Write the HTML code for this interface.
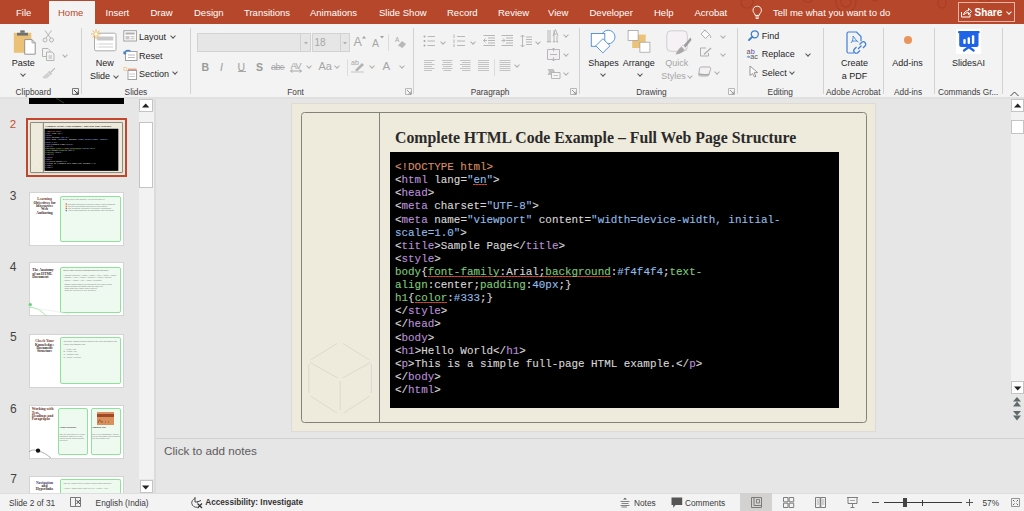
<!DOCTYPE html>
<html><head><meta charset="utf-8">
<style>
*{margin:0;padding:0;box-sizing:border-box}
html,body{width:1024px;height:511px;overflow:hidden;background:#e6e6e6;font-family:"Liberation Sans",sans-serif;position:relative}
.a{position:absolute}
svg{position:absolute;overflow:visible}
.tab{position:absolute;top:7.3px;color:#fff;font-size:9.5px;line-height:normal;white-space:nowrap}
.sep{position:absolute;top:28px;width:1px;height:66px;background:#d2d2d2}
.gl{position:absolute;top:86.5px;font-size:8.3px;line-height:normal;color:#404040;white-space:nowrap}
.rt{position:absolute;font-size:9px;margin-top:0.3px;line-height:normal;color:#262626;white-space:nowrap}
.dis{color:#a6a6a6}
.st{position:absolute;top:498.2px;font-size:8.3px;line-height:normal;color:#3a3a3a;white-space:nowrap}
.cl{position:absolute;left:395px;-webkit-text-stroke:0.12px currentColor;font-family:"Liberation Mono",monospace;font-size:10.9px;line-height:13.11px;color:#d6d6d6;white-space:pre}
.o{color:#d88c66}.p{color:#bb8fda}.b{color:#8ebde9}.g{color:#7ccb7c}
.sq{background:repeating-linear-gradient(90deg,#d8452c 0 2px,#a83420 2px 3px) no-repeat;background-size:100% 1.3px;background-position:0 10px}
.num{position:absolute;left:9.5px;font-size:12px;line-height:normal;color:#444;white-space:nowrap}
.thumb{position:absolute;left:28.5px;width:95.5px;height:54px;background:#fff;border:1px solid #d4d4d4}
.tt{position:absolute;font-family:"Liberation Serif",serif;font-weight:bold;font-size:3.7px;line-height:3.4px;color:#3a2a2a;white-space:nowrap}
.tb{position:absolute;font-size:2.1px;line-height:2.4px;color:#777;white-space:nowrap}
.gb{position:absolute;border:1.3px solid #8ee39a;background:#eefaef;border-radius:2px}
.chev{position:absolute;width:4px;height:4px;border-right:1px solid #555;border-bottom:1px solid #555;transform:rotate(45deg)}
.chev.d{border-color:#b0b0b0}
</style></head>
<body>
<!-- ============ TAB BAR ============ -->
<div class="a" style="left:0;top:0;width:1024px;height:24px;background:#b7472a"></div>
<svg width="1024" height="24" style="left:0;top:0">
  <g fill="none" stroke="#9a3a22" stroke-width="1.2" opacity="0.55">
    <circle cx="747" cy="2" r="6"/>
    <circle cx="846" cy="2" r="10"/>
    <circle cx="846" cy="2" r="5"/>
    <circle cx="808" cy="-4" r="6"/>
    <ellipse cx="942" cy="3" rx="4" ry="5"/>
    <circle cx="985" cy="-6" r="8"/>
    <circle cx="875" cy="-2" r="3"/>
  </g>
</svg>
<div class="a" style="left:48.6px;top:1px;width:46.2px;height:23px;background:#f3f3f3"></div>
<div class="tab" style="left:16px">File</div>
<div class="tab" style="left:58px;color:#b7472a">Home</div>
<div class="tab" style="left:105.5px">Insert</div>
<div class="tab" style="left:150.5px">Draw</div>
<div class="tab" style="left:194px">Design</div>
<div class="tab" style="left:244px">Transitions</div>
<div class="tab" style="left:310px">Animations</div>
<div class="tab" style="left:379px">Slide Show</div>
<div class="tab" style="left:447px">Record</div>
<div class="tab" style="left:498px">Review</div>
<div class="tab" style="left:548px">View</div>
<div class="tab" style="left:589.5px">Developer</div>
<div class="tab" style="left:654px">Help</div>
<div class="tab" style="left:694.5px">Acrobat</div>
<svg width="12" height="14" style="left:752px;top:5px">
  <path d="M5.2 1.2 C2.6 1.2 1 3.1 1 5.3 C1 7 2 8 2.8 9 L3.2 10.4 L7.2 10.4 L7.6 9 C8.4 8 9.4 7 9.4 5.3 C9.4 3.1 7.8 1.2 5.2 1.2 Z M3.4 12 L7 12 M3.8 13.4 L6.6 13.4" fill="none" stroke="#fff" stroke-width="1"/>
</svg>
<div class="tab" style="left:773px">Tell me what you want to do</div>
<div class="a" style="left:958px;top:2px;width:57px;height:20px;border:1px solid #e7b3a4"></div>
<svg width="12" height="11" style="left:961px;top:7px">
  <path d="M0.5 5 L0.5 10 L9 10 L9 7 M2.5 8 C3 5 5 3.6 7.5 3.6 L7.5 1.2 L10.5 4.5 L7.5 7.6 L7.5 5.6 C5.5 5.6 3.8 6.4 2.5 8 Z" fill="none" stroke="#fff" stroke-width="1"/>
</svg>
<div class="tab" style="left:974.5px;font-weight:bold;font-size:10px;top:7px">Share</div>
<div class="chev" style="left:1007px;top:9.5px;border-color:#fff"></div>

<!-- ============ RIBBON ============ -->
<div class="a" style="left:0;top:24px;width:1024px;height:73px;background:#f3f3f3"></div>
<div class="a" style="left:0;top:97px;width:1024px;height:2px;background:#e0e0e0"></div>
<div class="sep" style="left:81px"></div>
<div class="sep" style="left:190px"></div>
<div class="sep" style="left:413px"></div>
<div class="sep" style="left:579px"></div>
<div class="sep" style="left:737px"></div>
<div class="sep" style="left:823px"></div>
<div class="sep" style="left:883px"></div>
<div class="sep" style="left:934px"></div>
<div class="sep" style="left:1002px"></div>
<div class="gl" style="left:15.6px">Clipboard</div>
<div class="gl" style="left:124.6px">Slides</div>
<div class="gl" style="left:287.3px">Font</div>
<div class="gl" style="left:470.7px">Paragraph</div>
<div class="gl" style="left:636.3px">Drawing</div>
<div class="gl" style="left:767.6px">Editing</div>
<div class="gl" style="left:826px">Adobe Acrobat</div>
<div class="gl" style="left:894px">Add-ins</div>
<div class="gl" style="left:938px">Commands Gr...</div>
<!-- dialog launchers -->
<svg width="8" height="7" style="left:72px;top:88px"><path d="M0.5 0.5 H6.5 V6.5 H0.5 Z" fill="none" stroke="#777" stroke-width="1"/><path d="M2 2 L6 6 M3.5 6 H6 V3.5" fill="none" stroke="#444" stroke-width="1"/></svg>
<svg width="8" height="7" style="left:404.5px;top:88px"><path d="M0.5 0.5 H6.5 V6.5 H0.5 Z" fill="none" stroke="#b8b8b8" stroke-width="1"/><path d="M2 2 L6 6 M3.5 6 H6 V3.5" fill="none" stroke="#999" stroke-width="1"/></svg>
<svg width="8" height="7" style="left:570px;top:88px"><path d="M0.5 0.5 H6.5 V6.5 H0.5 Z" fill="none" stroke="#b8b8b8" stroke-width="1"/><path d="M2 2 L6 6 M3.5 6 H6 V3.5" fill="none" stroke="#999" stroke-width="1"/></svg>
<svg width="8" height="7" style="left:728px;top:88px"><path d="M0.5 0.5 H6.5 V6.5 H0.5 Z" fill="none" stroke="#b8b8b8" stroke-width="1"/><path d="M2 2 L6 6 M3.5 6 H6 V3.5" fill="none" stroke="#999" stroke-width="1"/></svg>

<!-- Clipboard group -->
<svg width="26" height="27" style="left:12px;top:29px">
  <path d="M1.8 3.8 H19.3 V23.8 H1.8 Z" fill="#eac176"/>
  <path d="M5 3.8 H16 V6.6 H5 Z" fill="#707070"/>
  <path d="M8.3 1.4 H12.7 V3.8 H8.3 Z" fill="#707070"/>
  <path d="M12.7 10.6 H20 L23.2 13.8 V25.2 H12.7 Z" fill="#fff" stroke="#8a8a8a" stroke-width="0.9"/>
  <path d="M20 10.6 V13.8 H23.2" fill="none" stroke="#8a8a8a" stroke-width="0.8"/>
</svg>
<div class="rt" style="left:11.7px;top:57.4px">Paste</div>
<div class="chev" style="left:20.5px;top:72px"></div>
<svg width="13" height="13" style="left:41.5px;top:29.5px">
  <g fill="none" stroke="#b4b4b4" stroke-width="1">
    <path d="M3 0.5 L8.5 8 M9.5 0.5 L4 8"/>
    <circle cx="3" cy="10" r="2"/><circle cx="9.5" cy="10" r="2"/>
  </g>
</svg>
<svg width="13" height="13" style="left:41.5px;top:47.5px">
  <g fill="#f3f3f3" stroke="#b4b4b4" stroke-width="1">
    <path d="M0.5 0.5 H6 L8 2.5 V8.5 H0.5 Z"/>
    <path d="M4.5 4 H10 L12 6 V12.5 H4.5 Z"/>
    <path d="M6.5 8 H10 M6.5 10 H10"/>
  </g>
</svg>
<div class="chev d" style="left:62.5px;top:52.5px"></div>
<svg width="14" height="12" style="left:41.5px;top:66.5px">
  <path d="M12.5 0.8 L13.3 1.6 L9.5 5.4 L8.7 4.6 Z" fill="#b8b8b8"/>
  <path d="M7.3 3.8 L10.2 6.7 L8.8 8.1 L5.9 5.2 Z" fill="#c4c4c4"/>
  <path d="M5.6 5.5 L8.5 8.4 L4.5 11.5 L0.8 11.2 L0.6 10 Z" fill="#d0d0d0"/>
</svg>

<!-- Slides group -->
<svg width="28" height="24" style="left:91px;top:28.5px">
  <rect x="3.5" y="4.2" width="21.5" height="17.6" rx="1.5" fill="#fff" stroke="#acacac" stroke-width="1"/>
  <rect x="5.8" y="7.5" width="16.5" height="4" fill="#cacaca"/>
  <path d="M7.5 15 H22 M7.5 18 H22" stroke="#cfcfcf" stroke-width="1"/>
  <path d="M5.6 15 H6.4 M5.6 18 H6.4" stroke="#cfcfcf" stroke-width="1"/>
  <g stroke="#efb550" stroke-width="0.9">
    <path d="M5 0 V2.2 M5 7.8 V10 M0 5 H2.2 M7.8 5 H10 M1.5 1.5 L3 3 M7 7 L8.5 8.5 M8.5 1.5 L7 3 M3 7 L1.5 8.5"/>
  </g>
  <circle cx="5" cy="5" r="2.2" fill="#fff" stroke="#efb550" stroke-width="0.9"/>
</svg>
<div class="rt" style="left:95.7px;top:57.4px">New</div>
<div class="rt" style="left:90px;top:70.3px">Slide</div>
<div class="chev" style="left:114px;top:73.5px"></div>
<svg width="15" height="12" style="left:123px;top:29.5px">
  <rect x="0.8" y="0.7" width="12.6" height="10.3" fill="#fff" stroke="#a0a0a0" stroke-width="1"/>
  <rect x="2.5" y="2.5" width="9.2" height="2" fill="#b0b0b0"/>
  <rect x="2.5" y="6" width="4" height="3.5" fill="#c8c8c8"/>
  <path d="M7.5 6.8 H11.5 M7.5 8.8 H11.5" stroke="#aaa" stroke-width="0.8"/>
</svg>
<div class="rt" style="left:139px;top:31.4px">Layout</div>
<div class="chev" style="left:170.5px;top:34px"></div>
<svg width="15" height="12" style="left:123px;top:48.5px">
  <rect x="2.5" y="2.5" width="11.5" height="9" fill="#fff" stroke="#a0a0a0" stroke-width="1"/>
  <path d="M5 6 H12 M5 8.5 H12" stroke="#aaa" stroke-width="0.8"/>
  <path d="M1 5 C1.5 1.5 5 0.5 7.5 2" fill="none" stroke="#3c7fd0" stroke-width="1.3"/>
  <path d="M0 2.5 L1.2 5.8 L4 4" fill="#3c7fd0"/>
</svg>
<div class="rt" style="left:139px;top:50.4px">Reset</div>
<svg width="15" height="13" style="left:123px;top:66.5px">
  <rect x="0.8" y="0.5" width="3" height="3" fill="none" stroke="#f0b050" stroke-width="0.8" stroke-dasharray="1 0.6"/>
  <path d="M5 2.2 H13.5" stroke="#e07a5a" stroke-width="1"/>
  <rect x="5" y="3.5" width="8.5" height="9" fill="#fff" stroke="#a0a0a0" stroke-width="1"/>
  <path d="M6.5 7 H12 M6.5 9.5 H12" stroke="#bbb" stroke-width="0.8"/>
</svg>
<div class="rt" style="left:139px;top:68.8px">Section</div>
<div class="chev" style="left:173px;top:70px"></div>

<!-- Font group -->
<div class="a" style="left:197px;top:33px;width:114px;height:19px;background:#e6e6e6;border:1px solid #d2d2d2"></div>
<div class="a" style="left:300px;top:34px;width:1px;height:17px;background:#d2d2d2"></div>
<svg width="5" height="3" style="left:303.5px;top:42px"><path d="M0 0 H4 L2 2.5 Z" fill="#b0b0b0"/></svg>
<div class="a" style="left:312px;top:33px;width:38px;height:19px;background:#e6e6e6;border:1px solid #d2d2d2"></div>
<div class="a" style="left:339.5px;top:34px;width:1px;height:17px;background:#d2d2d2"></div>
<svg width="5" height="3" style="left:342.5px;top:42px"><path d="M0 0 H4 L2 2.5 Z" fill="#b0b0b0"/></svg>
<div class="rt dis" style="left:314.5px;top:36.5px;font-size:10px">18</div>
<div class="rt dis" style="left:353.5px;top:35px;font-size:12.5px">A</div>
<svg width="5" height="3" style="left:362px;top:36px"><path d="M0 2.5 L2 0 L4 2.5 Z" fill="#a0a0a0"/></svg>
<div class="rt dis" style="left:372px;top:37px;font-size:10.5px">A</div>
<svg width="5" height="3" style="left:379.5px;top:36px"><path d="M0 0 H4 L2 2.5 Z" fill="#a0a0a0"/></svg>
<div class="a" style="left:388px;top:34px;width:1px;height:17px;background:#dcdcdc"></div>
<div class="rt dis" style="left:395px;top:36px;font-size:6.5px">A</div>
<svg width="10" height="8" style="left:396.5px;top:40px"><path d="M1 5.5 L5 1 L9 4 L5.5 8 Z" fill="#b8b8b8"/></svg>

<div class="rt" style="left:201.5px;top:60.5px;font-size:10.5px;font-weight:bold;color:#9a9a9a">B</div>
<div class="rt" style="left:220px;top:60.5px;font-size:10.5px;font-style:italic;color:#9a9a9a">I</div>
<div class="rt" style="left:237.5px;top:60.5px;font-size:10.5px;color:#9a9a9a">U</div>
<div class="a" style="left:237.5px;top:71px;width:8px;height:1px;background:#a8a8a8"></div>
<div class="rt" style="left:256px;top:60.5px;font-size:10.5px;font-weight:bold;color:#9a9a9a">S</div>
<div class="rt dis" style="left:271px;top:62px;font-size:9px;letter-spacing:-0.6px">abc</div>
<div class="a" style="left:271px;top:67px;width:14px;height:1px;background:#a8a8a8"></div>
<div class="rt dis" style="left:290.5px;top:59.5px;font-size:9.5px;letter-spacing:-0.8px">AV</div>
<svg width="13" height="4" style="left:290px;top:68.5px"><path d="M0.5 2 H11.5 M0.5 2 L2.5 0.5 M0.5 2 L2.5 3.5 M11.5 2 L9.5 0.5 M11.5 2 L9.5 3.5" fill="none" stroke="#a8a8a8" stroke-width="1"/></svg>
<div class="chev d" style="left:306.5px;top:63.5px"></div>
<div class="rt dis" style="left:318.5px;top:60px;font-size:11px">Aa</div>
<div class="chev d" style="left:335px;top:63.5px"></div>
<div class="a" style="left:346.5px;top:58.5px;width:1px;height:17px;background:#dcdcdc"></div>
<div class="rt dis" style="left:351px;top:58.5px;font-size:7px">ab</div>
<svg width="14" height="12" style="left:351px;top:60.5px"><path d="M4 9 L11 2 L13 4 L6 10.5 Z" fill="#b4b4b4"/><path d="M0 11 H13" stroke="#d0d0d0" stroke-width="1.3"/></svg>
<div class="chev d" style="left:369.5px;top:63.5px"></div>
<div class="rt dis" style="left:382.5px;top:59.5px;font-size:11.5px">A</div>
<div class="chev d" style="left:399.5px;top:63.5px"></div>

<!-- Paragraph group -->
<svg width="160" height="60" style="left:420px;top:26px">
  <g fill="none" stroke="#b0b0b0" stroke-width="0.9">
    <!-- bullets -->
    <circle cx="4.5" cy="10.5" r="1" fill="#a8a8a8" stroke="none"/><circle cx="4.5" cy="15" r="1" fill="#a8a8a8" stroke="none"/><circle cx="4.5" cy="19.5" r="1" fill="#a8a8a8" stroke="none"/>
    <path d="M7.5 10.5 H15 M7.5 15 H15 M7.5 19.5 H15"/>
    <!-- numbering -->
    <path d="M34 8.5 V12 M34 13.5 V17 M34 18 V21"/>
    <path d="M37 10.5 H45 M37 15 H45 M37 19.5 H45"/>
    <!-- dec indent -->
    <path d="M63.5 9.5 H75 M68 12 H75 M68 14.5 H75 M68 17 H75 M63.5 19.5 H75"/>
    <path d="M67 14.5 H63.5 M65.5 12.5 L63.5 14.5 L65.5 16.5"/>
    <!-- inc indent -->
    <path d="M81.5 9.5 H93 M86 12 H93 M86 14.5 H93 M86 17 H93 M81.5 19.5 H93"/>
    <path d="M81.5 14.5 H85 M83 12.5 L85 14.5 L83 16.5"/>
    <!-- line spacing -->
    <path d="M102.5 9 V21 M100.5 11 L102.5 9 L104.5 11 M100.5 19 L102.5 21 L104.5 19"/>
    <path d="M106 11 H112 M106 13.5 H112 M106 16 H112 M106 18.5 H112"/>
    <!-- text direction -->
    <path d="M128 4 V16 M130 4 V16 M134 4 V16 M137 16 V10 M133 10 L135.5 3.5 L138 10 M134 8 H137"/>
    <path d="M127 15 L128 16.5 L129 15 M129 15 L130 16.5 L131 15 M133 15 L134 16.5 L135 15 M136 15 L137 16.5 L138 15" stroke-width="0.8"/>
    <!-- align text -->
    <path d="M127.5 23.5 H139.5 V33.5 H127.5 Z" fill="#f3eff3"/>
    <path d="M130 28.5 H137"/>
    <path d="M133.5 22 V25.5 M132 23.5 L133.5 22 L135 23.5 M133.5 31 V35 M132 33.5 L133.5 35 L135 33.5" stroke-width="0.8"/>
    <!-- smart art -->
    <path d="M127.5 43 H133.5 L135 46 L133.5 49 H127.5 L129 46 Z" fill="#c0c0c0" stroke="none"/>
    <path d="M131.5 46.5 H140 V52.5 H131.5 Z" fill="#f6f6f6"/>
    <path d="M133.5 49.5 H138" stroke-width="0.7"/>
  </g>
  <g fill="none" stroke="#bdbdbd" stroke-width="0.9">
    <path d="M4 34.5 H14.5 M4 36.5 H12 M4 38.5 H14.5 M4 40.5 H12 M4 42.5 H14.5 M4 44.5 H12"/>
    <path d="M22 34.5 H32.5 M23 36.5 H31.5 M22 38.5 H32.5 M23 40.5 H31.5 M22 42.5 H32.5 M23.5 44.5 H31"/>
    <path d="M40 34.5 H50.5 M42 36.5 H50.5 M40 38.5 H50.5 M42 40.5 H50.5 M40 42.5 H50.5 M42 44.5 H50.5"/>
    <path d="M58 34.5 H69 M58 36.5 H69 M58 38.5 H69 M58 40.5 H69 M58 42.5 H69 M58 44.5 H69"/>
    <path d="M79.5 34.5 H90.5 M79.5 36.5 H90.5 M79.5 38.5 H90.5 M79.5 40.5 H90.5 M79.5 42.5 H90.5 M79.5 44.5 H90.5"/>
  </g>
</svg>
<div class="chev d" style="left:441px;top:39.5px"></div>
<div class="chev d" style="left:470.5px;top:39.5px"></div>
<div class="chev d" style="left:536px;top:39.5px"></div>
<div class="chev d" style="left:564px;top:33px"></div>
<div class="chev d" style="left:564px;top:52px"></div>
<div class="chev d" style="left:564px;top:71px"></div>
<div class="chev d" style="left:515px;top:63px"></div>
<div class="a" style="left:494px;top:58.5px;width:1px;height:17px;background:#dcdcdc"></div>

<!-- Drawing group -->
<svg width="26" height="26" style="left:589px;top:28px">
  <g fill="#fff" stroke="#4a8ad4" stroke-width="0.9">
    <circle cx="19.2" cy="9" r="6.8"/>
    <rect x="2.3" y="5.5" width="13.5" height="12.8"/>
    <path d="M13.9 10.7 L21 17.8 L13.9 24.9 L6.8 17.8 Z"/>
  </g>
</svg>
<div class="rt" style="left:588.2px;top:57.4px">Shapes</div>
<div class="chev" style="left:600.5px;top:72px"></div>
<svg width="24" height="25" style="left:627px;top:29px">
  <rect x="5.2" y="5.6" width="13.5" height="13.4" fill="#ebc277"/>
  <rect x="1.1" y="1.5" width="10" height="10" fill="#fff" stroke="#999" stroke-width="0.7"/>
  <rect x="12.9" y="13.2" width="10" height="10" fill="#fff" stroke="#999" stroke-width="0.7"/>
</svg>
<div class="rt" style="left:622.8px;top:57.4px">Arrange</div>
<div class="chev" style="left:637.5px;top:72px"></div>
<svg width="26" height="25" style="left:666px;top:30px">
  <rect x="0.8" y="0.8" width="20.5" height="20.5" rx="4" fill="#f5f1f5" stroke="#cfcfcf" stroke-width="1"/>
  <path d="M24.5 7.5 L17.5 15.5 L19.5 17.5 L25.5 10 Z" fill="#9e9e9e"/><path d="M16.8 15.2 L20 18.4 L18.8 19.6 L15.6 16.4 Z" fill="#fff" stroke="#b0b0b0" stroke-width="0.6"/><path d="M15.2 16.8 L18.4 20 C17 22.5 14 24.2 9.5 24.5 C11 21.5 13 18.5 15.2 16.8 Z" fill="#a8a8a8"/>
</svg>
<div class="rt dis" style="left:665.3px;top:57.4px">Quick</div>
<div class="rt dis" style="left:661.2px;top:70.3px">Styles</div>
<div class="chev d" style="left:688px;top:73.5px"></div>
<svg width="12" height="11" style="left:699.5px;top:28.5px">
  <path d="M5 1 L9.5 5.5 L5.5 9.5 L1 5 Z" fill="#fafafa" stroke="#a8a8a8" stroke-width="0.9"/>
  <path d="M4 0.5 L6 2.5 M9.5 5.5 C10.5 6.5 11 8 10.5 9" fill="none" stroke="#a8a8a8" stroke-width="0.9"/>
</svg>
<div class="chev d" style="left:721px;top:34px"></div>
<svg width="12" height="10" style="left:699.5px;top:46.5px">
  <path d="M0.5 1 H6 M0.5 1 V9 H8.5 V6" fill="none" stroke="#a8a8a8" stroke-width="0.9"/>
  <path d="M3.5 7 L10.5 0.5 L11.5 1.5 L4.5 8 Z" fill="#b0b0b0"/>
</svg>
<div class="chev d" style="left:721px;top:52px"></div>
<svg width="14" height="11" style="left:697.5px;top:66px">
  <path d="M3 1 H11 C12.5 1 13 2 12.5 3.5 L11 8.5 C10.5 9.5 10 10 9 10 H2 C1 10 0.5 9 0.8 8 L1.5 3 C1.8 1.8 2.2 1 3 1 Z" fill="#f4f0f4" stroke="#a8a8a8" stroke-width="0.9"/>
  <path d="M0.8 8 C2 8.5 8 8.7 11 8.5" fill="none" stroke="#a8a8a8" stroke-width="1.5"/>
</svg>
<div class="chev d" style="left:714.5px;top:69.5px"></div>

<!-- Editing group -->
<svg width="12" height="11" style="left:747.5px;top:30px">
  <circle cx="6.8" cy="4.3" r="3.5" fill="none" stroke="#3d7dd0" stroke-width="1.3"/>
  <path d="M4.3 6.8 L1 10" stroke="#3d7dd0" stroke-width="1.8" stroke-linecap="round"/>
</svg>
<div class="rt" style="left:761.8px;top:31.2px">Find</div>
<svg width="14" height="12" style="left:746px;top:48px">
  <text x="0.6" y="6" font-family="Liberation Sans" font-size="7.2" fill="#555">a</text>
  <text x="4.8" y="6" font-family="Liberation Sans" font-size="7.2" fill="#6a4aa8">b</text>
  <text x="4.2" y="11" font-family="Liberation Sans" font-size="7.2" fill="#555">ac</text>
  <path d="M0.8 8.8 H3.6 M2.4 7.6 L3.6 8.8 L2.4 10" fill="none" stroke="#3d7dd0" stroke-width="0.8"/>
</svg>
<div class="rt" style="left:761.8px;top:49.2px">Replace</div>
<div class="chev" style="left:806px;top:52px"></div>
<svg width="10" height="13" style="left:748.5px;top:65px">
  <path d="M1 1 L1 10.5 L3.5 8.5 L5.5 12 L7 11.3 L5 7.8 L8.5 7.5 Z" fill="#fff" stroke="#8a8a8a" stroke-width="0.9"/>
</svg>
<div class="rt" style="left:761.8px;top:67.4px">Select</div>
<div class="chev" style="left:789.5px;top:70px"></div>

<!-- Adobe Acrobat -->
<svg width="22" height="24" style="left:845.5px;top:31px">
  <path d="M8 22 H2.5 C1.5 22 1 21.5 1 20.5 V2.5 C1 1.5 1.5 1 2.5 1 H10.5 L15 5.5 V10" fill="none" stroke="#3f7fdc" stroke-width="1.2"/>
  <path d="M5 12 C6.5 10 7.5 7 7 5 C9 7 10 10 12.5 11 M6 10 H11" fill="none" stroke="#3f7fdc" stroke-width="0.9"/>
  <path d="M13.5 13.5 L15.5 11.5 C16.5 10.5 18 10.5 19 11.5 C20 12.5 20 14 19 15 L17 17 M14 19.5 L12 21.5 C11 22.5 9.5 22.5 8.5 21.5 C7.5 20.5 7.5 19 8.5 18 L10.5 16 M12 18 L15.5 14.5" fill="none" stroke="#3f7fdc" stroke-width="1.2"/>
</svg>
<div class="rt" style="left:840.9px;top:57.4px">Create</div>
<div class="rt" style="left:841.7px;top:70.3px">a PDF</div>

<!-- Add-ins -->
<div class="a" style="left:903.5px;top:36.3px;width:8px;height:8px;border-radius:50%;background:#e8945a"></div>
<div class="rt" style="left:892.2px;top:57.4px">Add-ins</div>

<!-- SlidesAI -->
<div class="a" style="left:955.8px;top:29.3px;width:25.2px;height:24.7px;background:#fff"></div>
<svg width="22" height="21" style="left:957.6px;top:31.3px">
  <rect x="0" y="0" width="21.7" height="2.2" rx="1" fill="#1f63e6"/>
  <path d="M1.2 1.5 H20.5 V14 C20.5 15.2 19.7 16 18.5 16 H3.2 C2 16 1.2 15.2 1.2 14 Z" fill="#1f63e6"/>
  <rect x="5.3" y="8" width="2.4" height="5" rx="1" fill="#fff"/>
  <rect x="9.6" y="6.2" width="2.4" height="6.8" rx="1" fill="#fff"/>
  <rect x="13.9" y="4.3" width="2.4" height="8.7" rx="1" fill="#fff"/>
  <path d="M10.8 16 L6 19.5 M10.8 16 L15.6 19.5" stroke="#1f63e6" stroke-width="2.2" stroke-linecap="round"/>
</svg>
<div class="rt" style="left:951.9px;top:57.4px">SlidesAI</div>
<svg width="10" height="6" style="left:1009.5px;top:90.5px"><path d="M0.5 5 L4.5 1 L8.5 5" fill="none" stroke="#444" stroke-width="1"/></svg>

<!-- RIBBON_GROUPS -->

<!-- ============ LEFT PANEL ============ -->
<!-- left panel border -->
<div class="a" style="left:154px;top:99px;width:2px;height:394px;background:#dcdcdc"></div>
<!-- partial top thumbnail (slide 1) -->
<div class="a" style="left:29px;top:98px;width:95px;height:5.5px;background:#000"></div>
<svg width="20" height="7" style="left:56px;top:98px"><path d="M0 0 L8 5" stroke="#3a7a3a" stroke-width="0.6"/></svg>
<!-- slide 2 selected -->
<div class="num" style="left:9.7px;top:117.5px;color:#c4512f;font-size:11.5px">2</div>
<div class="a" style="left:26px;top:118px;width:100.5px;height:59px;border:2px solid #c4462a"></div>
<div class="a" style="left:0;top:0;width:0;height:0;transform-origin:0 0;transform:translate(28.2px,120.7px) scale(0.16444) translate(-291px,-103px)">
<div class="a" style="left:291px;top:103px;width:585px;height:329px;background:#eeeadc"></div>
<div class="a" style="left:301px;top:112px;width:566px;height:311px;border:1.2px solid #85827a;border-radius:3.5px"></div>
<div class="a" style="left:379px;top:113px;width:1.2px;height:309px;background:#85827a"></div>
<svg width="80" height="80" style="left:300px;top:335px">
  <g fill="none" stroke="#d9d5c6" stroke-width="0.8">
    <path d="M37 8.5 L10.5 25 M43 8.5 L69.5 25 M10 27.5 L38 43 M70.5 27.5 L42.5 43 M8.8 29 V58 M71.4 29 V58 M40.2 46 V75 M10.5 61 L37 78 M70 61 L43.5 78"/>
  </g>
</svg>
<div class="a" style="left:395px;top:128.7px;font-family:'Liberation Serif',serif;font-weight:bold;font-size:15.8px;line-height:normal;color:#2a2a2a;white-space:nowrap">Complete HTML Code Example – Full Web Page Structure</div>
<div class="a" style="left:390px;top:152px;width:449px;height:256px;background:#000"></div>
<!-- CODE -->
<div class="cl" style="top:161.07px"><span class="o">&lt;!DOCTYPE html&gt;</span></div>
<div class="cl" style="top:174.18px">&lt;<span class="p">html</span> lang=<span class="b">"<span class="sq">en</span>"</span>&gt;</div>
<div class="cl" style="top:187.29px">&lt;<span class="p">head</span>&gt;</div>
<div class="cl" style="top:200.40px">&lt;<span class="p">meta</span> charset=<span class="b">"UTF-8"</span>&gt;</div>
<div class="cl" style="top:213.51px">&lt;<span class="p">meta</span> name=<span class="b">"viewport"</span> content=<span class="b">"width=device-width, initial-</span></div>
<div class="cl" style="top:226.62px"><span class="b">scale=1.0"</span>&gt;</div>
<div class="cl" style="top:239.73px">&lt;<span class="p">title</span>&gt;Sample Page&lt;/<span class="p">title</span>&gt;</div>
<div class="cl" style="top:252.84px">&lt;<span class="p">style</span>&gt;</div>
<div class="cl" style="top:265.95px"><span class="g">body</span>{<span class="sq"><span class="g">font-family</span>:Arial;<span class="g">background</span></span>:<span class="b">#f4f4f4</span>;<span class="g">text-</span></div>
<div class="cl" style="top:279.06px"><span class="g">align</span>:center;<span class="g">padding</span>:<span class="b">40px</span>;}</div>
<div class="cl" style="top:292.17px"><span class="g">h1</span>{<span class="g sq">color</span>:<span class="b">#333</span>;}</div>
<div class="cl" style="top:305.28px">&lt;/<span class="p">style</span>&gt;</div>
<div class="cl" style="top:318.39px">&lt;/<span class="p">head</span>&gt;</div>
<div class="cl" style="top:331.50px">&lt;<span class="p">body</span>&gt;</div>
<div class="cl" style="top:344.61px">&lt;<span class="p">h1</span>&gt;Hello World&lt;/<span class="p">h1</span>&gt;</div>
<div class="cl" style="top:357.72px">&lt;<span class="p">p</span>&gt;This is a simple full-page HTML example.&lt;/<span class="p">p</span>&gt;</div>
<div class="cl" style="top:370.83px">&lt;/<span class="p">body</span>&gt;</div>
<div class="cl" style="top:383.94px">&lt;/<span class="p">html</span>&gt;</div>
</div>

<div class="a" style="left:29.85px;top:122.2px;width:93px;height:51.1px;border:0.8px solid #8f8c82;border-radius:1px"></div>
<div class="a" style="left:42.5px;top:122.5px;width:0.8px;height:50.5px;background:#8f8c82"></div>
<!-- slide 3 -->
<div class="num" style="left:9.7px;top:189px">3</div>
<div class="thumb" style="top:191.6px"></div>
<div class="gb" style="left:60.1px;top:195.8px;width:60.8px;height:46px;border-style:solid"></div>
<div class="tt" style="left:29.5px;top:198.1px;width:30px;text-align:center"><span style="color:#7a3a2a">Learning</span><br>Objectives for<br>Interactive<br>Web<br>Authoring</div>
<div class="tb" style="left:63px;top:198.2px">By the end of this session, you will be able to:</div>
<div class="tb" style="left:67.8px;top:202.6px;line-height:2.2px">Navigate document structure using HTML headings<br>Create links images and lists in web pages<br>Use semantic elements to structure information<br>Apply good practices for accessible web authoring</div>
<svg width="4" height="10" style="left:65px;top:202.8px"><circle cx="1.3" cy="1" r="0.8" fill="#d2603a"/><circle cx="1.3" cy="3.2" r="0.8" fill="#d88040"/><circle cx="1.3" cy="5.4" r="0.8" fill="#d07040"/><circle cx="1.3" cy="7.6" r="0.8" fill="#4a7ad0"/></svg>

<!-- slide 4 -->
<div class="num" style="left:9.7px;top:259.7px">4</div>
<div class="thumb" style="top:262.3px"></div>
<div class="gb" style="left:60.1px;top:267px;width:60.8px;height:45.6px"></div>
<div class="tt" style="left:32.3px;top:269.1px">The Anatomy<br>of an HTML<br>Document</div>
<div class="tb" style="left:63.5px;top:269.4px;color:#555">Every page follows a standard skeleton structure</div>
<div class="tb" style="left:63.5px;top:273.5px;line-height:2.6px">&lt;!DOCTYPE html&gt; &lt;html&gt; &lt;head&gt; &lt;title&gt; &lt;meta&gt; &lt;body&gt;<br>&lt;header&gt; &lt;nav&gt; &lt;main&gt; &lt;section&gt; &lt;footer&gt; content<br>&lt;article&gt; &lt;aside&gt; &lt;div&gt; &lt;span&gt; elements</div>
<div class="tb" style="left:64.5px;top:282.5px;line-height:2.1px">DOCTYPE declares the document type and version<br>head contains metadata and the page title<br>body holds the visible page content<br>Tags are nested in a tree structure</div>
<svg width="50" height="14" style="left:28.6px;top:302.5px">
  <circle cx="1.3" cy="1.6" r="1.7" fill="#6ad37a"/>
  <path d="M0.5 4 C6 5 10 6 13 9 C15 11 16 12 18 13" fill="none" stroke="#8ee39a" stroke-width="0.8"/>
  <path d="M8 6 C20 7 32 9 42 12" fill="none" stroke="#e6e6e6" stroke-width="0.6"/>
</svg>

<!-- slide 5 -->
<div class="num" style="left:9.9px;top:330.4px">5</div>
<div class="thumb" style="top:333.6px"></div>
<div class="gb" style="left:60.3px;top:337.4px;width:60.3px;height:46.3px"></div>
<div class="tt" style="left:29.5px;top:340.1px;width:30px;text-align:center"><span style="color:#7a3a2a">Check Your</span><br>Knowledge:<br>Document<br>Structure</div>
<div class="tb" style="left:63.5px;top:340.3px;line-height:2.5px;color:#667">Question: Which element must be the very first thing in an<br>HTML file? Choose one:</div>
<div class="tb" style="left:63.5px;top:347.5px;line-height:2.7px">A. &lt;html&gt; tag<br>B. &lt;head&gt; tag<br>C. &lt;!DOCTYPE&gt;<br>D. &lt;body&gt; element</div>

<!-- slide 6 -->
<div class="num" style="left:9.9px;top:401.5px">6</div>
<div class="thumb" style="top:404.6px"></div>
<div class="gb" style="left:58.4px;top:408.4px;width:29.4px;height:46.2px"></div>
<div class="gb" style="left:90.7px;top:408.4px;width:29.9px;height:46.2px"></div>
<div class="tt" style="left:31.7px;top:408.2px;color:#6a3022">Working with<br>Text,<br>Headings and<br>Paragraphs</div>
<div class="a" style="left:96.7px;top:411.9px;width:17.3px;height:12.7px;background:#d9905c"></div>
<div class="a" style="left:96.7px;top:413.5px;width:17.3px;height:3.8px;background:#9e4a28"></div>
<svg width="17" height="6" style="left:97px;top:418px"><path d="M1 5 C2 1 3 1 4 4 L6 4 M8 4 H9 M11 4 H12" fill="none" stroke="#6a3020" stroke-width="0.6"/></svg>
<div class="tt" style="left:59.5px;top:426.1px;font-size:2.3px">Visual Hierarchy</div>
<div class="tb" style="left:59.5px;top:432.6px;line-height:2.1px">Use h1 through h6 to create<br>hierarchy. Each level has<br>visual weight and meaning<br>structure.</div>
<div class="tt" style="left:92px;top:426.1px;font-size:2.3px">Semantic Text</div>
<div class="tb" style="left:92px;top:432.6px;line-height:2.1px">Use p for paragraphs, strong<br>em for emphasis and meaning<br>not just styling only.</div>
<svg width="30" height="12" style="left:29px;top:447px">
  <path d="M0 5 C3 2 6 3 9 4 C14 5 17 7 22 11" fill="none" stroke="#777" stroke-width="0.6"/>
  <circle cx="9" cy="3.6" r="2.2" fill="#111"/>
</svg>

<!-- slide 7 -->
<div class="num" style="left:10.2px;top:471.5px">7</div>
<div class="a" style="left:28.6px;top:475.6px;width:95.6px;height:18px;background:#fff;border:1px solid #d4d4d4;border-bottom:none;overflow:hidden"></div>
<div class="a" style="left:60.2px;top:479.2px;width:60.6px;height:14px;border:1.3px solid #8ee39a;border-bottom:none;background:#eefaef;border-radius:2px 2px 0 0"></div>
<div class="tt" style="left:29.5px;top:481.9px;width:30px;text-align:center;line-height:3.3px"><span style="color:#3a3a6a">Navigation</span><br>and<br>Hyperlinks</div>
<div class="tb" style="left:63.5px;top:481.3px;line-height:4.8px">Use the anchor tag to connect pages and resources<br>&lt;a href="page.html"&gt;Link text&lt;/a&gt; &lt;a href="#id"&gt;<br>Relative paths link to other files</div>
<div class="a" style="left:0;top:493px;width:156px;height:3px;background:#e6e6e6"></div>

<!-- left scrollbar -->
<div class="a" style="left:138.5px;top:111px;width:15px;height:368px;background:#f2f2f2"></div>
<div class="a" style="left:139px;top:98.6px;width:13.5px;height:13.3px;background:#fff;border:1px solid #c4c4c4"></div>
<svg width="8" height="5" style="left:141.8px;top:103px"><path d="M0 4.5 L3.7 0.5 L7.4 4.5 Z" fill="#222"/></svg>
<div class="a" style="left:139px;top:122.4px;width:13.5px;height:65.6px;background:#fff;border:1px solid #c4c4c4"></div>
<div class="a" style="left:139.5px;top:479.5px;width:13px;height:13px;background:#fff;border:1px solid #c4c4c4"></div>
<svg width="8" height="5" style="left:142px;top:484.5px"><path d="M0 0.5 L3.7 4.5 L7.4 0.5 Z" fill="#222"/></svg>


<!-- ============ SLIDE ============ -->
<div class="a" style="left:0;top:0;width:0;height:0">
<div class="a" style="left:291px;top:103px;width:585px;height:329px;background:#eeeadc;box-shadow:inset 0 0 0 1px #dddbd3"></div>
<div class="a" style="left:301px;top:112px;width:566px;height:311px;border:1.2px solid #85827a;border-radius:3.5px"></div>
<div class="a" style="left:379px;top:113px;width:1.2px;height:309px;background:#85827a"></div>
<svg width="80" height="80" style="left:300px;top:335px">
  <g fill="none" stroke="#d9d5c6" stroke-width="0.8">
    <path d="M37 8.5 L10.5 25 M43 8.5 L69.5 25 M10 27.5 L38 43 M70.5 27.5 L42.5 43 M8.8 29 V58 M71.4 29 V58 M40.2 46 V75 M10.5 61 L37 78 M70 61 L43.5 78"/>
  </g>
</svg>
<div class="a" style="left:395px;top:128.7px;font-family:'Liberation Serif',serif;font-weight:bold;font-size:15.8px;line-height:normal;color:#2a2a2a;white-space:nowrap">Complete HTML Code Example – Full Web Page Structure</div>
<div class="a" style="left:390px;top:152px;width:449px;height:256px;background:#000"></div>
<!-- CODE -->
<div class="cl" style="top:161.07px"><span class="o">&lt;!DOCTYPE html&gt;</span></div>
<div class="cl" style="top:174.18px">&lt;<span class="p">html</span> lang=<span class="b">"<span class="sq">en</span>"</span>&gt;</div>
<div class="cl" style="top:187.29px">&lt;<span class="p">head</span>&gt;</div>
<div class="cl" style="top:200.40px">&lt;<span class="p">meta</span> charset=<span class="b">"UTF-8"</span>&gt;</div>
<div class="cl" style="top:213.51px">&lt;<span class="p">meta</span> name=<span class="b">"viewport"</span> content=<span class="b">"width=device-width, initial-</span></div>
<div class="cl" style="top:226.62px"><span class="b">scale=1.0"</span>&gt;</div>
<div class="cl" style="top:239.73px">&lt;<span class="p">title</span>&gt;Sample Page&lt;/<span class="p">title</span>&gt;</div>
<div class="cl" style="top:252.84px">&lt;<span class="p">style</span>&gt;</div>
<div class="cl" style="top:265.95px"><span class="g">body</span>{<span class="sq"><span class="g">font-family</span>:Arial;<span class="g">background</span></span>:<span class="b">#f4f4f4</span>;<span class="g">text-</span></div>
<div class="cl" style="top:279.06px"><span class="g">align</span>:center;<span class="g">padding</span>:<span class="b">40px</span>;}</div>
<div class="cl" style="top:292.17px"><span class="g">h1</span>{<span class="g sq">color</span>:<span class="b">#333</span>;}</div>
<div class="cl" style="top:305.28px">&lt;/<span class="p">style</span>&gt;</div>
<div class="cl" style="top:318.39px">&lt;/<span class="p">head</span>&gt;</div>
<div class="cl" style="top:331.50px">&lt;<span class="p">body</span>&gt;</div>
<div class="cl" style="top:344.61px">&lt;<span class="p">h1</span>&gt;Hello World&lt;/<span class="p">h1</span>&gt;</div>
<div class="cl" style="top:357.72px">&lt;<span class="p">p</span>&gt;This is a simple full-page HTML example.&lt;/<span class="p">p</span>&gt;</div>
<div class="cl" style="top:370.83px">&lt;/<span class="p">body</span>&gt;</div>
<div class="cl" style="top:383.94px">&lt;/<span class="p">html</span>&gt;</div>
</div>

<!-- ============ RIGHT SCROLLBAR ============ -->
<div class="a" style="left:1010.5px;top:98.5px;width:13.5px;height:283px;background:#f2f2f2"></div>
<div class="a" style="left:1010.5px;top:98.5px;width:13px;height:13px;background:#fff;border:1px solid #c4c4c4"></div>
<svg width="8" height="5" style="left:1013.5px;top:102.5px"><path d="M0 4.5 L3.7 0.5 L7.4 4.5 Z" fill="#222"/></svg>
<div class="a" style="left:1010.5px;top:120.4px;width:13px;height:14.1px;background:#fff;border:1px solid #c4c4c4"></div>
<div class="a" style="left:1010.5px;top:381.3px;width:13px;height:13px;background:#fff;border:1px solid #c4c4c4"></div>
<svg width="8" height="5" style="left:1013.5px;top:386px"><path d="M0 0.5 L3.7 4.5 L7.4 0.5 Z" fill="#222"/></svg>
<svg width="10" height="25" style="left:1013px;top:397px">
  <path d="M4 0 L8 4.5 H0 Z M4 4.5 L8 9.5 H0 Z" fill="#5e6a6a"/>
  <path d="M0 14 H8 L4 18.5 Z M0 18.5 H8 L4 23.5 Z" fill="#5e6a6a"/>
</svg>


<!-- ============ NOTES ============ -->
<div class="a" style="left:156px;top:438px;width:868px;height:1px;background:#d0d0d0"></div>
<div class="a" style="left:164px;top:444.1px;font-size:11.7px;line-height:normal;color:#5c5c5c;white-space:nowrap">Click to add notes</div>

<!-- ============ STATUS BAR ============ -->
<div class="a" style="left:0;top:493px;width:1024px;height:18px;background:#f3f3f3;border-top:1px solid #dedede"></div>
<div class="st" style="left:9px">Slide 2 of 31</div>
<svg width="13" height="11" style="left:70px;top:497px">
  <path d="M0.5 0.5 H5.5 V9.5 H0.5 Z M5.5 0.5 H10.5 V9.5 H5.5" fill="none" stroke="#6a6a6a" stroke-width="0.9"/>
  <path d="M6.5 3 L10 7 M10 3 L6.5 7" stroke="#444" stroke-width="1"/>
</svg>
<div class="st" style="left:95.6px">English (India)</div>
<svg width="13" height="12" style="left:191px;top:497px">
  <path d="M4 1.5 C1.5 2.5 0.5 4.5 0.8 6.5 C1.2 9 3.5 10.5 6 10.2" fill="none" stroke="#555" stroke-width="1"/>
  <path d="M4 0 V5 H7 M6 5 L10 3.5" fill="none" stroke="#444" stroke-width="1"/>
  <path d="M6.5 6.5 L11 11 M11 6.5 L6.5 11" stroke="#333" stroke-width="1.2"/>
</svg>
<div class="st" style="left:205.3px;font-weight:bold;color:#333;font-size:8.2px">Accessibility: Investigate</div>
<svg width="11" height="10" style="left:620px;top:497px">
  <path d="M3 2.5 L5 0.8 L7 2.5 Z" fill="#555"/>
  <path d="M0.5 4.5 H9.5 M1.5 6.5 H8.5 M0.5 8.5 H9.5 M1.5 10 H7" stroke="#666" stroke-width="0.8"/>
</svg>
<div class="st" style="left:634px">Notes</div>
<svg width="12" height="12" style="left:670.8px;top:496.8px">
  <path d="M0.5 0.5 H11.2 V8 H4.5 L2.2 10.8 V8 H0.5 Z" fill="#555"/>
</svg>
<div class="st" style="left:685px">Comments</div>
<div class="a" style="left:740px;top:493.4px;width:32px;height:17.6px;background:#d4d2d0"></div>
<svg width="12" height="12" style="left:750.5px;top:496.5px">
  <path d="M0.5 0.5 H10.5 V10.5 H0.5 Z M3 0.5 V8.5 H10.5" fill="none" stroke="#707070" stroke-width="0.9"/>
  <path d="M5.5 2.5 H8.5 V6 H5.5 Z" fill="none" stroke="#707070" stroke-width="0.8"/>
</svg>
<svg width="12" height="12" style="left:783px;top:496.5px">
  <path d="M0.5 0.5 H5 V4.8 H0.5 Z M6.2 0.5 H10.7 V4.8 H6.2 Z M0.5 6.2 H5 V10.5 H0.5 Z M6.2 6.2 H10.7 V10.5 H6.2 Z" fill="none" stroke="#707070" stroke-width="0.9"/>
</svg>
<svg width="12" height="12" style="left:815px;top:496.5px">
  <path d="M0.5 0.5 H5.2 V10.5 H0.5 Z M5.8 0.5 H10.5 V10.5 H5.8 Z" fill="none" stroke="#707070" stroke-width="0.9"/>
  <path d="M1.8 3 H4 M1.8 5 H4 M1.8 7 H4 M7 3 H9.3 M7 5 H9.3 M7 7 H9.3" stroke="#909090" stroke-width="0.7"/>
</svg>
<svg width="12" height="12" style="left:847px;top:496.5px">
  <path d="M0 0.5 H11 M1 1 V6.5 H10 V1 M5.5 6.5 V10.5 M3.5 10.5 H7.5" fill="none" stroke="#707070" stroke-width="0.9"/>
  <path d="M3 3.5 H8" stroke="#909090" stroke-width="0.8"/>
</svg>
<div class="a" style="left:872px;top:502px;width:6.5px;height:1px;background:#555"></div>
<div class="a" style="left:884px;top:502px;width:78px;height:1.3px;background:#3a3a3a"></div>
<div class="a" style="left:922px;top:499.5px;width:1px;height:6px;background:#3a3a3a"></div>
<div class="a" style="left:903px;top:498.2px;width:4px;height:8.5px;background:#444"></div>
<div class="a" style="left:966px;top:502px;width:6.6px;height:1px;background:#555"></div>
<div class="a" style="left:969px;top:499px;width:1px;height:6.8px;background:#555"></div>
<div class="st" style="left:982.5px">57%</div>
<svg width="10" height="10" style="left:1011px;top:497.5px">
  <path d="M0.5 0.5 H8.5 V8.5 H0.5 Z" fill="none" stroke="#8a8a8a" stroke-width="0.9"/>
  <path d="M2 2 L3.5 3.5 M7 2 L5.5 3.5 M2 7 L3.5 5.5 M7 7 L5.5 5.5" stroke="#555" stroke-width="0.9"/>
</svg>

</body></html>
